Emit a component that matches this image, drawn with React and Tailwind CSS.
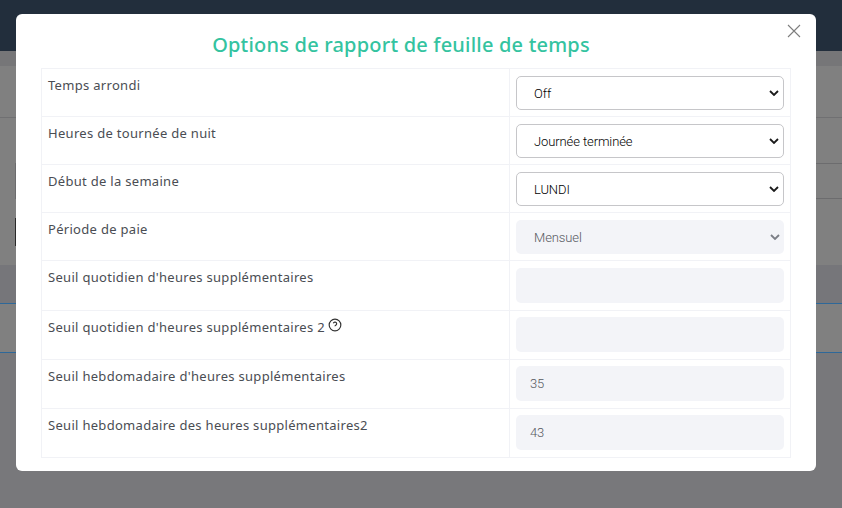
const rows = [
  { label: "Temps arrondi", kind: "select", value: "Off", h: 48, pt: "pt-[7px]" },
  { label: "Heures de tournée de nuit", kind: "select", value: "Journée terminée", h: 48, pt: "pt-[7px]" },
  { label: "Début de la semaine", kind: "select", value: "LUNDI", h: 48, pt: "pt-[7px]" },
  { label: "Période de paie", kind: "disabled", value: "Mensuel", h: 48, pt: "pt-[7px]" },
  { label: "Seuil quotidien d'heures supplémentaires", kind: "input", value: "", h: 50, pt: "pt-[7px]" },
  { label: "Seuil quotidien d'heures supplémentaires 2", kind: "input", value: "", h: 49, help: true, pt: "pt-[6px]" },
  { label: "Seuil hebdomadaire d'heures supplémentaires", kind: "input", value: "35", h: 49, pt: "pt-[6px]" },
  { label: "Seuil hebdomadaire des heures supplémentaires2", kind: "input", value: "43", h: 49, pt: "pt-[6px]" },
];

function Chevron({ disabled }) {
  return (
    <svg width="10" height="7" viewBox="0 0 10 7" fill="none" className="absolute right-[4px] top-1/2 -translate-y-1/2">
      <path d="M1 1.5 L5 5.5 L9 1.5" stroke={disabled ? "#7b7e86" : "#1a1a1a"} strokeWidth="1.8" />
    </svg>
  );
}

function Control({ row }) {
  if (row.kind === "select") {
    return (
      <div className="relative h-[34px] rounded-[5px] border border-[#c6c6c9] bg-white pl-[17px] pt-[1px] flex items-center font-['Roboto',sans-serif] text-[13px] font-light tracking-[-0.1px] text-black">
        {row.value}
        <Chevron />
      </div>
    );
  }
  if (row.kind === "disabled") {
    return (
      <div className="relative h-[34px] rounded-[5px] bg-[#f3f4f8] pl-[18px] pt-[1px] flex items-center font-['Roboto',sans-serif] text-[13px] font-light tracking-[-0.1px] text-[#55585f]">
        {row.value}
        <Chevron disabled />
      </div>
    );
  }
  return (
    <div className="h-[35px] rounded-[5px] bg-[#f3f4f8] pl-[14px] flex items-center font-['Roboto',sans-serif] text-[13px] font-light tracking-[-0.1px] text-[#55585f]">
      {row.value}
    </div>
  );
}

export default function App() {
  return (
    <div className="relative h-[508px] w-[842px] overflow-hidden bg-[#78787b] font-['Noto_Sans',sans-serif]">
      <div className="h-[51px] bg-[#222e3c]" />
      <div className="h-[15px] bg-[#767678]" />
      <div className="h-[52px] border-b border-[#707072] bg-[#808080]" />
      <div className="h-[46px] bg-[#808080] pl-[15px]">
        <div className="h-full border-b border-[#6c6c6e]" />
      </div>
      <div className="h-[35px] bg-[#808080] pl-[15px]">
        <div className="h-full border-b border-l border-[#6c6c6e]" />
      </div>
      <div className="h-[66px] bg-[#808080] pl-[15px] pt-[19px]">
        <div className="h-[28px] w-[1px] bg-[#2a2a2a]" />
      </div>
      <div className="h-[39px] border-b border-[#2e6899] bg-[#76767a]" />
      <div className="h-[49px] border-b border-[#2e6899] bg-[#808080]" />

      <div className="absolute left-[16px] top-[14px] h-[457px] w-[800px] rounded-[6px] bg-white px-[25px] pt-[17px]">
        <button className="absolute right-[15px] top-[10px] text-[#7d7d7d]" aria-label="Fermer">
          <svg width="14" height="14" viewBox="0 0 14 14" fill="none">
            <path d="M1 1 L13 13 M13 1 L1 13" stroke="currentColor" strokeWidth="1.1" />
          </svg>
        </button>
        <h2 className="h-[37px] pr-[30px] text-center text-[20px] font-medium leading-[28px] tracking-[0.2px] text-[#34c3a0]">
          Options de rapport de feuille de temps
        </h2>
        <div className="w-[750px] border border-[#f1f2f6]">
          {rows.map((row, i) => (
            <div key={row.label} className={`flex ${i > 0 ? "border-t border-[#f1f2f6]" : ""}`} style={{ height: (i === 0 ? row.h - 1 : row.h) }}>
              <div className="w-[468px] border-r border-[#f1f2f6] pl-[6px] pt-[6px] text-[13px] leading-[20px] tracking-[0.3px] text-[#4a4d53] flex items-start">
                <span>{row.label}</span>
                {row.help && (
                  <svg width="14" height="14" viewBox="0 0 24 24" fill="none" stroke="#333" strokeWidth="2" className="ml-[3px] mt-[1px]">
                    <circle cx="12" cy="12" r="10" />
                    <path d="M9.1 9a3 3 0 0 1 5.8 1c0 2-3 2.5-3 4" />
                    <path d="M12 17.5h.01" />
                  </svg>
                )}
              </div>
              <div className={`flex-1 px-[6px] ${row.pt}`}>
                <Control row={row} />
              </div>
            </div>
          ))}
        </div>
      </div>
    </div>
  );
}
